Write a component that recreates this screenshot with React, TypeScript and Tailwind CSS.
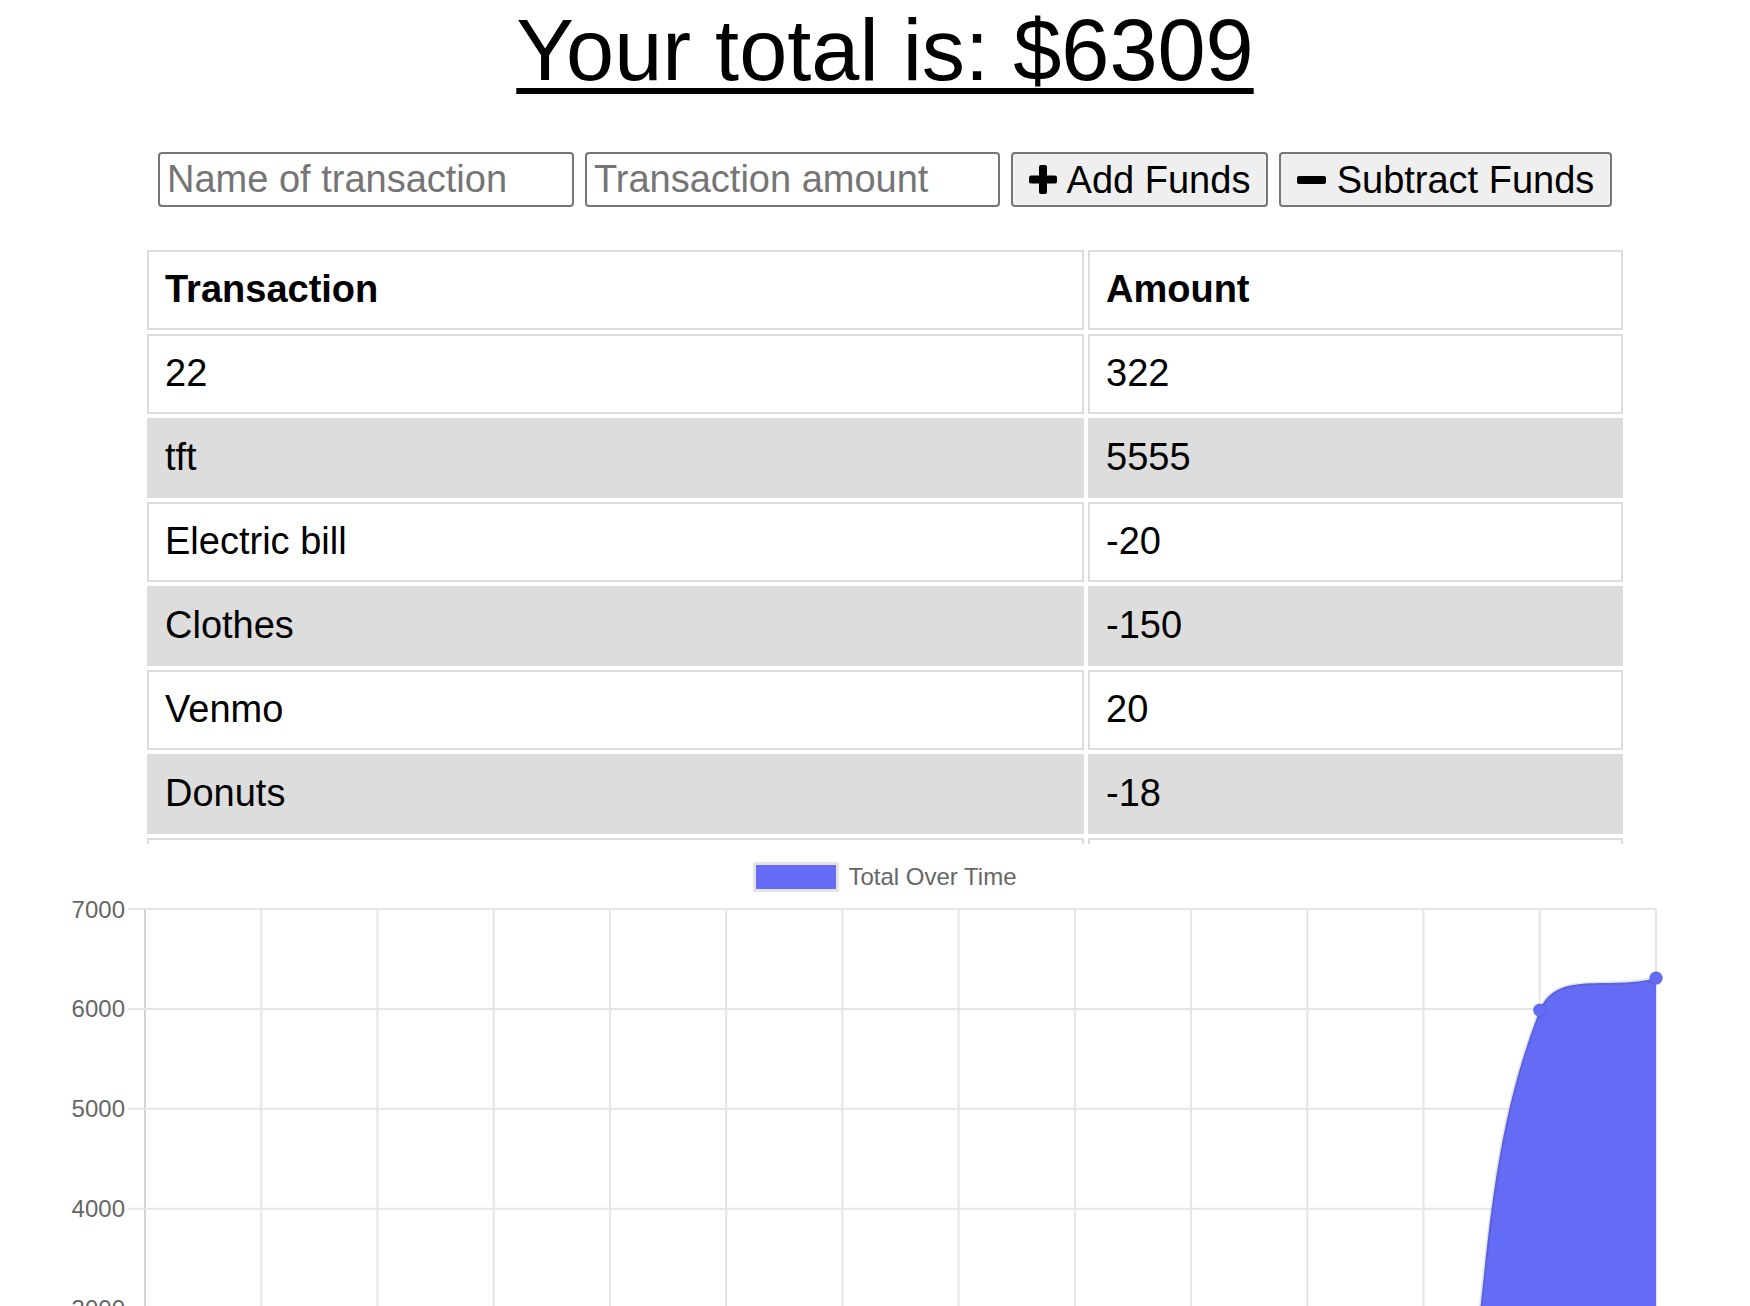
import React from 'react';

const rows: [string, string][] = [
  ['22', '322'],
  ['tft', '5555'],
  ['Electric bill', '-20'],
  ['Clothes', '-150'],
  ['Venmo', '20'],
  ['Donuts', '-18'],
  ['Paycheck', '600'],
];

const font = { fontFamily: '"Liberation Sans", Arial, Helvetica, sans-serif' };

const PlusIcon = () => (
  <svg width="28" height="29" viewBox="0 0 28 29">
    <rect x="10" y="0" width="8" height="29" rx="2" fill="#000" />
    <rect x="0" y="10.5" width="28" height="8" rx="2" fill="#000" />
  </svg>
);

const MinusIcon = () => (
  <svg width="29" height="8" viewBox="0 0 29 8">
    <rect x="0" y="0" width="29" height="8" rx="2" fill="#000" />
  </svg>
);

// chart geometry (px inside the svg)
const plotLeft = 145;
const plotRight = 1656;
const step = (plotRight - plotLeft) / 13;
const yOf = (v: number) => 17 + (7000 - v) * 0.0999;

const Chart = () => {
  const ticks = [7000, 6000, 5000, 4000, 3000];
  const xs = Array.from({ length: 14 }, (_, i) => plotLeft + i * step);
  const p11 = { x: xs[11], y: yOf(432) };
  const p12 = { x: xs[12], y: yOf(5987) };
  const p13 = { x: xs[13], y: yOf(6309) };
  const line = `M ${p11.x} ${p11.y} C 1501.2 489.5, 1463.5 311.9, ${p12.x} ${p12.y} C 1556.3 77.1, 1609.6 98.9, ${p13.x} ${p13.y}`;
  const area = `${line} L ${p13.x} 700 L ${p11.x} 700 Z`;

  return (
    <svg width="1750" height="414" viewBox="0 0 1750 414" className="block">
      {xs.map((x, i) => (
        <line key={i} x1={x} y1={17} x2={x} y2={420} stroke={i === 0 ? '#d2d2d2' : '#e5e5e5'} strokeWidth={2} />
      ))}
      {ticks.map((t) => (
        <g key={t}>
          <line x1={128} y1={yOf(t)} x2={plotRight} y2={yOf(t)} stroke="#e5e5e5" strokeWidth={2} />
          <text x={125} y={yOf(t) + 8.5} textAnchor="end" fontSize={24} fill="#666" style={font}>
            {t}
          </text>
        </g>
      ))}
      <path d={area} fill="#646cf5" />
      <path d={line} fill="none" stroke="rgba(0,0,0,0.1)" strokeWidth={3.5} />
      <circle cx={p12.x} cy={p12.y} r={6.5} fill="#646cf5" stroke="rgba(0,0,0,0.08)" strokeWidth={1.5} />
      <circle cx={p13.x} cy={p13.y} r={6.5} fill="#646cf5" stroke="rgba(0,0,0,0.08)" strokeWidth={1.5} />
    </svg>
  );
};

export default function App() {
  return (
    <div className="w-[1750px] h-[1306px] overflow-hidden bg-white text-black" style={font}>
      <div className="pl-[20px]">
        <h1 className="text-center text-[86.5px] leading-[100px] font-normal underline decoration-[6px] underline-offset-[8px]">
          Your total is: $6309
        </h1>

        <div className="mt-[52px] flex justify-center gap-[11px] h-[55px]">
          <input
            placeholder="Name of transaction"
            className="w-[416px] h-[55px] border-2 border-[#767676] rounded-[4px] px-[7px] text-[38px] placeholder:text-[#757575] outline-none"
          />
          <input
            placeholder="Transaction amount"
            className="w-[415px] h-[55px] border-2 border-[#767676] rounded-[4px] px-[7px] text-[38px] placeholder:text-[#757575] outline-none"
          />
          <button className="w-[257px] h-[55px] flex items-center justify-center gap-[10px] bg-[#efefef] border-2 border-[#767676] rounded-[4px] text-[38px] leading-none">
            <PlusIcon />
            <span>Add Funds</span>
          </button>
          <button className="w-[333px] h-[55px] flex items-center justify-center gap-[11px] bg-[#efefef] border-2 border-[#767676] rounded-[4px] text-[38px] leading-none">
            <MinusIcon />
            <span>Subtract Funds</span>
          </button>
        </div>

        <div className="mt-[39px] h-[598px] overflow-hidden flex justify-center">
          <table className="table-fixed border-separate border-spacing-[4px] w-[1484px] h-fit text-[38px] leading-[42px]">
            <thead>
              <tr>
                <th className="w-[937px] text-left font-bold border-2 border-[#ddd] px-[16px] pt-[16px] pb-[18px]">Transaction</th>
                <th className="text-left font-bold border-2 border-[#ddd] px-[16px] pt-[16px] pb-[18px]">Amount</th>
              </tr>
            </thead>
            <tbody>
              {rows.map(([name, amount], i) => (
                <tr key={i}>
                  <td className={`border-2 border-[#ddd] px-[16px] pt-[16px] pb-[18px] ${i % 2 === 1 ? 'bg-[#ddd]' : 'bg-white'}`}>{name}</td>
                  <td className={`border-2 border-[#ddd] px-[16px] pt-[16px] pb-[18px] ${i % 2 === 1 ? 'bg-[#ddd]' : 'bg-white'}`}>{amount}</td>
                </tr>
              ))}
            </tbody>
          </table>
        </div>

        <div className="mt-[18px] h-[30px] flex justify-center items-center gap-[9px]">
          <div className="w-[86px] h-[30px] border-[3px] border-[#e3e3e3] bg-[#646cf5]" />
          <span className="text-[24px] leading-[30px] text-[#666]">Total Over Time</span>
        </div>
      </div>

      <Chart />
    </div>
  );
}
